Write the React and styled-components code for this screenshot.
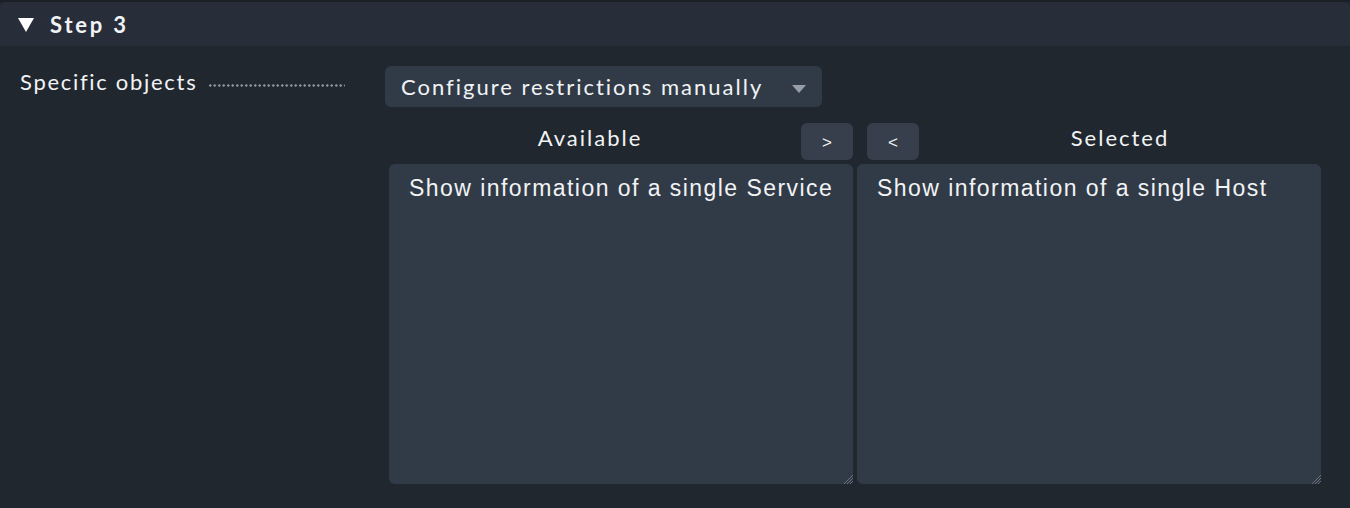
import React from 'react';
import styled, { createGlobalStyle } from 'styled-components';

const GlobalStyle = createGlobalStyle`
  html, body {
    margin: 0;
    padding: 0;
    background: #21272f;
    font-family: Lato, "Open Sans", sans-serif;
    color: #f1f3f5;
  }
`;

const Page = styled.div`
  width: 1350px;
  height: 508px;
  padding-top: 2px;
  box-sizing: border-box;
  background: #21272f;
  border-top: 2px solid #1b2027;
  overflow: hidden;
`;

const Header = styled.div`
  display: flex;
  align-items: center;
  gap: 16px;
  height: 44px;
  padding-left: 18px;
  margin-top: -2px;
  background: #272e39;
  border-radius: 6px 6px 0 0;
  font-size: 22px;
  font-weight: 700;
  letter-spacing: 2.8px;
`;

const Triangle = styled.span`
  width: 0;
  height: 0;
  border-left: 8px solid transparent;
  border-right: 8px solid transparent;
  border-top: 14px solid #ffffff;
  margin-top: 2px;
`;

const Body = styled.div`
  display: flex;
  padding: 20px 0 0 20px;
`;

const Label = styled.div`
  width: 325px;
  margin-right: 40px;
  display: flex;
  align-items: baseline;
  font-size: 22px;
  letter-spacing: 1.7px;
  padding-top: 2px;
  white-space: nowrap;
`;

const Dots = styled.span`
  flex: 1;
  margin-left: 11px;
  height: 3px;
  background-image: radial-gradient(circle, #8f959e 1.1px, transparent 1.4px);
  background-size: 4.5px 3px;
  background-repeat: repeat-x;
  transform: translateY(-3px);
`;

const Content = styled.div`
  display: flex;
  flex-direction: column;
`;

const Dropdown = styled.div`
  display: flex;
  align-items: center;
  justify-content: space-between;
  width: 437px;
  height: 41px;
  box-sizing: border-box;
  padding: 0 16px;
  border-radius: 6px;
  background: #313b47;
  font-size: 22px;
  letter-spacing: 2px;
`;

const Caret = styled.span`
  width: 0;
  height: 0;
  border-left: 7px solid transparent;
  border-right: 7px solid transparent;
  border-top: 8px solid #999ea6;
  margin-top: 5px;
`;

const Dual = styled.div`
  display: grid;
  grid-template-columns: 464px 464px;
  column-gap: 4px;
  margin-left: 4px;
  margin-top: 15px;
`;

const HeadRow = styled.div`
  grid-column: 1 / 3;
  display: grid;
  grid-template-columns: 402px 128px 402px;
  align-items: center;
  height: 38px;
`;

const ColTitle = styled.div`
  text-align: center;
  font-size: 22px;
  letter-spacing: 2px;
  margin-top: -7px;
`;

const Buttons = styled.div`
  display: flex;
  gap: 14px;
  padding-left: 10px;
`;

const MoveButton = styled.button`
  width: 52px;
  height: 37px;
  border: none;
  border-radius: 6px;
  background: #363f4b;
  color: #f1f3f5;
  font-family: "Liberation Sans", Arial, sans-serif;
  font-size: 17px;
  padding: 4px 0 0;
`;

const ListBox = styled.div`
  position: relative;
  height: 320px;
  margin-top: 4px;
  box-sizing: border-box;
  padding: 11px 20px;
  border-radius: 6px;
  background: #313b48;
  font-family: "Liberation Sans", Arial, sans-serif;
  font-size: 23px;
  letter-spacing: 1.45px;
  white-space: nowrap;
`;

const Grip = styled.svg`
  position: absolute;
  right: 0;
  bottom: 0;
`;

function ResizeGrip() {
  return (
    <Grip width="10" height="10" viewBox="0 0 10 10">
      <path d="M10 1 L1 10 M10 4 L4 10 M10 7 L7 10" stroke="#6b717a" strokeWidth="1" />
    </Grip>
  );
}

export default function App() {
  return (
    <>
      <GlobalStyle />
      <Page>
        <Header>
          <Triangle />
          Step 3
        </Header>
        <Body>
          <Label>
            Specific objects
            <Dots />
          </Label>
          <Content>
            <Dropdown>
              Configure restrictions manually
              <Caret />
            </Dropdown>
            <Dual>
              <HeadRow>
                <ColTitle>Available</ColTitle>
                <Buttons>
                  <MoveButton>&gt;</MoveButton>
                  <MoveButton>&lt;</MoveButton>
                </Buttons>
                <ColTitle>Selected</ColTitle>
              </HeadRow>
              <ListBox>
                Show information of a single Service
                <ResizeGrip />
              </ListBox>
              <ListBox>
                Show information of a single Host
                <ResizeGrip />
              </ListBox>
            </Dual>
          </Content>
        </Body>
      </Page>
    </>
  );
}
